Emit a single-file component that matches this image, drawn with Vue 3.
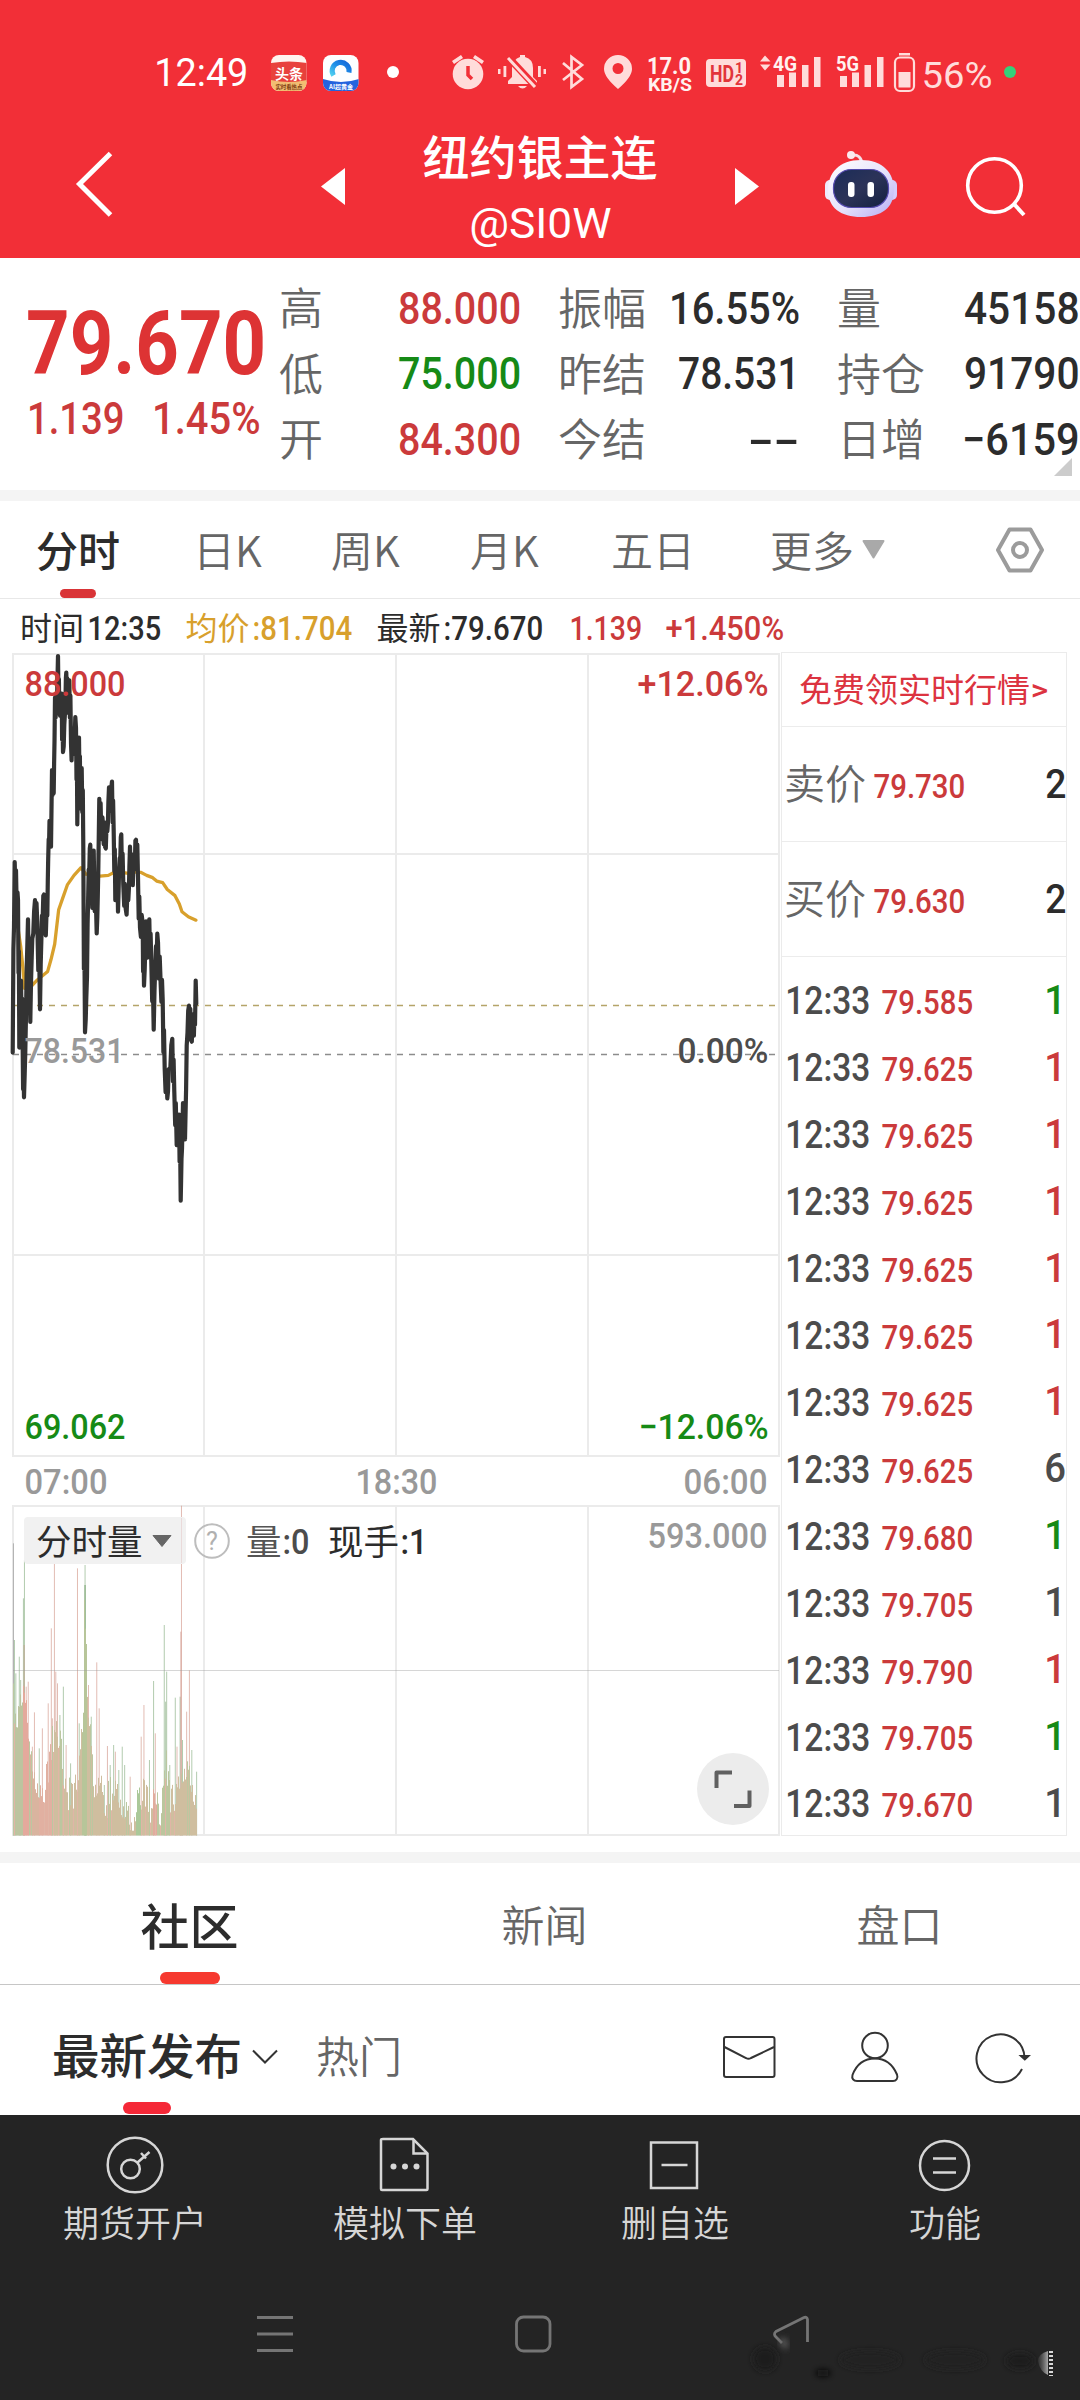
<script setup>
import { h } from 'vue'

// Condensed numeral text: s = font size, w = drawn width, box height = cap height
const T = (props) => {
  const s = +props.s
  const w = +props.w
  const cap = s * 0.711
  return h('svg', { width: w, height: cap, viewBox: `0 0 ${w} ${cap}`, style: { overflow: 'visible', flex: 'none', display: 'block' } }, [
    h('text', {
      x: -s * 0.045, y: cap, 'font-size': s, fill: 'currentColor',
      textLength: w + s * 0.08, lengthAdjust: 'spacingAndGlyphs'
    }, props.t)
  ])
}
T.props = ['t', 'w', 's']

const quotes = [
  [['高', '88.000', 119.5, 'red'], ['振幅', '16.55%', 127.5, 'ink'], ['量', '45158', 112, 'ink']],
  [['低', '75.000', 119.5, 'green'], ['昨结', '78.531', 118, 'ink'], ['持仓', '91790', 112, 'ink']],
  [['开', '84.300', 119.5, 'red'], ['今结', '--', 48, 'ink'], ['日增', '−6159', 114, 'ink']]
]

const tabs = ['分时', '日K', '周K', '月K', '五日']

const ticks = [
  ['79.585', '1', 'green'], ['79.625', '1', 'red'], ['79.625', '1', 'red'], ['79.625', '1', 'red'],
  ['79.625', '1', 'red'], ['79.625', '1', 'red'], ['79.625', '1', 'red'], ['79.625', '6', 'mid'],
  ['79.680', '1', 'green'], ['79.705', '1', 'mid'], ['79.790', '1', 'red'], ['79.705', '1', 'green'],
  ['79.670', '1', 'mid']
]

const chartLabels = [
  { t: '88.000', x: 26, y: 45, w: 98, c: 'red' },
  { t: '+12.06%', x: 639, y: 45, w: 128, c: 'red' },
  { t: '78.531', x: 26, y: 412, w: 97, c: 'grey' },
  { t: '0.00%', x: 679, y: 412, w: 88, c: 'mid' },
  { t: '69.062', x: 26, y: 788, w: 98, c: 'green' },
  { t: '−12.06%', x: 640, y: 788, w: 127, c: 'green' },
  { t: '07:00', x: 26, y: 843, w: 80, c: 'grey' },
  { t: '18:30', x: 357, y: 843, w: 79, c: 'grey' },
  { t: '06:00', x: 685, y: 843, w: 81, c: 'grey' },
  { t: '593.000', x: 649, y: 897, w: 117, c: 'grey' },
  { t: ':0', x: 284, y: 903, w: 24, c: 'mid' },
  { t: ':1', x: 402, y: 903, w: 24, c: 'ink' }
]

const price = [
  38, 1078, 44, 580, 50, 700, 54, 680, 58, 1065, 63, 890, 68, 1070, 72, 1195, 78, 980, 84, 730, 91, 998, 97, 780,
  105, 680, 112, 740, 120, 965, 126, 720, 132, 665, 135, 760, 142, 720, 146, 520, 150, 475, 153, 540, 156, 340,
  161, 400, 165, 150, 170, 190, 174, 42, 178, 190, 185, 140, 189, 293, 195, 190, 199, 85, 203, 190, 208, 105,
  213, 270, 218, 297, 222, 230, 228, 230, 232, 482, 237, 255, 241, 440, 245, 335, 250, 540, 255, 1025, 261, 880,
  266, 600, 271, 535, 277, 700, 281, 550, 290, 767, 295, 600, 298, 415, 304, 510, 309, 480, 315, 540, 322, 500,
  327, 385, 332, 440, 336, 370, 341, 500, 346, 680, 350, 600, 354, 710, 359, 570, 364, 508, 370, 640, 377, 702,
  385, 680, 390, 540, 396, 620, 403, 600, 408, 522, 414, 620, 420, 752, 428, 740, 432, 903, 438, 735, 443, 830,
  448, 730, 454, 840, 461, 1018, 468, 800, 474, 790, 482, 900, 488, 940, 494, 1120, 502, 1198, 508, 1120,
  517, 1042, 523, 1180, 530, 1320, 537, 1240, 542, 1465, 546, 1330, 549, 1210, 555, 1305, 560, 1060, 567, 955,
  573, 1045, 580, 1005, 585, 1005, 587, 890, 589, 950
]
const average = [
  55, 760, 62, 800, 68, 850, 74, 910, 90, 908, 110, 890, 143, 866, 153, 835, 164, 795, 176, 705, 190, 670, 202, 640,
  222, 615, 243, 595, 258, 612, 300, 617, 325, 615, 343, 607, 370, 608, 385, 610, 400, 606, 422, 607, 440, 615,
  458, 621, 470, 630, 488, 634, 502, 652, 525, 668, 538, 690, 546, 710, 565, 723, 588, 732
]
const toPixels = (list) => {
  const out = []
  for (let i = 0; i < list.length; i += 2) out.push([list[i] / 3, list[i + 1] / 2.613 - 12])
  return out
}
const pricePoints = (() => {
  const pts = toPixels(price)
  const out = []
  pts.forEach(([x, y], i) => {
    out.push([x, y])
    const n = pts[i + 1]
    if (n && n[0] - x > 1.2) {
      const k = i % 2 ? 0.42 : 0.6
      const j = 11
      out.push([x + (n[0] - x) * 0.35, y + (n[1] - y) * k + j])
      out.push([x + (n[0] - x) * 0.65, y + (n[1] - y) * k - j])
    }
  })
  return out.map((p) => p.map((v) => v.toFixed(1)).join(',')).join(' ')
})()
const averagePoints = toPixels(average).map((p) => p.join(',')).join(' ')

// volume profile: [x, top]
const profile = [
  [38, 900], [50, 960], [62, 900], [70, 850], [78, 940], [85, 1080], [100, 1130], [120, 1190], [140, 1100], [155, 1000],
  [165, 960], [178, 1070], [195, 1180], [215, 1180], [230, 1080], [241, 940], [244, 600], [250, 700], [252, 890], [258, 960], [272, 1180], [290, 1130],
  [300, 1220], [330, 1160], [345, 1200], [360, 1240], [385, 1285], [400, 1180], [420, 1170], [440, 1230],
  [448, 1130], [460, 1270], [480, 1080], [495, 1200], [515, 1160], [530, 1110], [545, 1130], [571, 1210]
]
const topAt = (x) => {
  for (let i = 1; i < profile.length; i++) {
    if (x <= profile[i][0]) {
      const [a, b] = [profile[i - 1], profile[i]]
      return a[1] + ((b[1] - a[1]) * (x - a[0])) / (b[0] - a[0])
    }
  }
  return 1230
}
const toneAt = (x) => {
  if (x < 66) return '#bcc49f'
  if (x < 84) return '#e4a99c'
  if (x < 112) return '#d9b49f'
  if (x < 156) return '#e1b0a1'
  if (x > 238 && x < 252) return '#b7c599'
  if (x > 394 && x < 410) return '#abc899'
  if (x > 442 && x < 456) return '#e1ab9d'
  if (x > 460 && x < 492) return '#bbc69d'
  return '#cfbe9f'
}
const bars = []
for (let i = 0; i < 184; i++) {
  const cx = 38 + i * 2.904
  const noise = ((i * 7919 + i * i * 31) % 97) / 97
  const top = topAt(cx) + (noise - 0.45) * 110
  bars.push({ x: 13 + i, y: Math.min(top, 1292) / 3 + 748, c: noise > 0.86 ? '#e0b5a6' : noise < 0.1 ? '#bbc7a0' : toneAt(cx) })
}
const spikes = [
  [39, 430, 'k'], [42, 720, 'g'], [46, 820, 'g'], [56, 770, 'g'], [60, 840, 'g'], [68, 595, 'g'], [71, 480, 'g'],
  [70, 735, 'r'], [76, 860, 'r'], [82, 845, 'r'], [94, 1040, 'r'], [100, 937, 'r'], [114, 1045, 'g'], [123, 985, 'r'], [140, 910, 'r'],
  [149, 685, 'r'], [152, 955, 'r'], [158, 480, 'r'], [162, 815, 'r'], [167, 850, 'r'], [174, 945, 'g'], [184, 860, 'g'], [192, 1035, 'r'],
  [205, 1090, 'g'], [225, 505, 'r'], [230, 970, 'g'], [247, 495, 'g'], [246, 555, 'g'], [248, 555, 'g'], [251, 795, 'g'], [257, 855, 'r'],
  [265, 950, 'g'], [281, 787, 'r'], [288, 925, 'r'], [303, 1155, 'g'], [312, 1038, 'r'], [320, 1095, 'g'], [330, 1035, 'g'], [335, 1055, 'r'],
  [345, 1110, 'g'], [355, 1040, 'g'], [362, 1095, 'g'], [378, 1130, 'r'], [410, 1010, 'r'], [418, 915, 'r'], [434, 1080, 'g'], [446, 843, 'g'],
  [451, 1000, 'r'], [477, 675, 'g'], [481, 905, 'g'], [484, 815, 'g'], [493, 1095, 'g'], [509, 893, 'g'], [514, 1040, 'r'], [523, 890, 'g'],
  [527, 317, 'r'], [525, 695, 'r'], [530, 1020, 'g'], [542, 935, 'r'], [550, 811, 'r'], [557, 1050, 'g'], [571, 1115, 'g']
].map(([x, y, k]) => ({ x: x / 2.904 - 0.5, y: y / 3 + 748, k }))

const actions = ['期货开户', '模拟下单', '删自选', '功能']
</script>

<template>
  <main class="screen">
    <header class="top">
      <div class="status">
        <T class="clock" t="12:49" w="91" s="38" />
        <svg class="app-icon" width="36" height="36" viewBox="0 0 36 36">
          <defs><clipPath id="round"><rect width="35.5" height="36" rx="8" /></clipPath></defs>
          <g clip-path="url(#round)">
            <rect width="36" height="36" fill="#fff4ef" />
            <path d="M0 8 Q18 5 36 8V27H0Z" fill="#e8413c" />
            <path d="M0 25Q18 29 36 25V36H0Z" fill="#f2bd72" />
            <text x="4" y="23.5" font-size="14" font-weight="700" fill="#fff">头条</text>
            <text x="4.5" y="34" font-size="5.500" font-weight="700" fill="#7d3b10" textLength="27">实时看热点</text>
          </g>
        </svg>
        <svg class="app-icon second" width="36" height="36" viewBox="0 0 36 36">
          <defs><linearGradient id="swirl" x1="0" y1="1" x2="1" y2="0"><stop offset="0" stop-color="#4fd0f0" /><stop offset=".5" stop-color="#1f8fe8" /><stop offset="1" stop-color="#1566d8" /></linearGradient></defs>
          <g clip-path="url(#round)">
            <rect width="36" height="36" fill="#fdfeff" />
            <path d="M0 24Q18 30 36 24V36H0Z" fill="#2463dd" />
            <path d="M10.500 20.500a8.500 8.500 0 1 1 15.500-3" fill="none" stroke="url(#swirl)" stroke-width="5" />
            <text x="6" y="34" font-size="6" font-weight="700" fill="#fff" textLength="24">AI超黄金</text>
          </g>
        </svg>
        <i class="dot"></i>
        <svg class="sys" width="570" height="44" viewBox="450 50 570 44">
          <g fill="#ffdcda">
            <circle cx="468" cy="74" r="15.300" />
            <path d="M452 61l9-6 2 3-9 6zM484 61l-9-6-2 3 9 6z" />
            <path d="M468 66v9l4 4" fill="none" stroke="#f22f37" stroke-width="3.500" />
            <path d="M508 84v-3l4-4V68q1-9 8-11v-2h5v2q8 2 8 11v9l4 4v3zM518 86h9q-4.500 5-9 0z" />
            <rect x="498" y="69" width="2.500" height="5" /><rect x="503.500" y="66" width="2.800" height="11" />
            <rect x="538" y="66" width="2.800" height="11" /><rect x="543.500" y="69" width="2.500" height="5" />
            <path d="M508 57l28 30" stroke="#f22f37" stroke-width="7" /><path d="M508 58l27 29" stroke="#ffdcda" stroke-width="3" />
            <path d="M563 63l19 16-10.500 8V57L582 65l-19 15" fill="none" stroke="#ffdcda" stroke-width="2.700" />
            <path fill-rule="evenodd" d="M618 55a14 14 0 0 1 14 14q0 8-14 20-14-12-14-20a14 14 0 0 1 14-14zm0 8a5.500 5.500 0 1 0 0 11 5.500 5.500 0 0 0 0-11z" />
            <rect x="706" y="59" width="40" height="28" rx="4" />
            <path d="M760 61.500l5-6 5.500 6zM760 64.500l5 6 5.500-6z" />
            <rect x="777" y="75" width="7" height="12" /><rect x="789" y="72.500" width="7" height="14.500" />
            <rect x="802" y="65" width="6.500" height="22" /><rect x="814" y="57" width="6.500" height="30" />
            <rect x="840" y="76" width="7" height="11" /><rect x="852" y="72.500" width="7" height="14.500" />
            <rect x="864.500" y="65" width="6.500" height="22" /><rect x="877" y="57" width="6.500" height="30" />
            <rect x="899" y="53" width="11" height="2.500" />
            <rect x="895" y="57.500" width="19" height="33.500" rx="5" fill="none" stroke="#ffdcda" stroke-width="2.200" />
            <rect x="898.500" y="72" width="12" height="15.500" />
          </g>
          <g fill="#fff2f0" font-weight="700">
            <text x="647" y="73.500" font-size="23" textLength="44" lengthAdjust="spacingAndGlyphs">17.0</text>
            <text x="648" y="91" font-size="19" textLength="44" lengthAdjust="spacingAndGlyphs">KB/S</text>
            <text x="773" y="70.500" font-size="21" textLength="24" lengthAdjust="spacingAndGlyphs">4G</text>
            <text x="836" y="70.500" font-size="21" textLength="23" lengthAdjust="spacingAndGlyphs">5G</text>
          </g>
          <g fill="#e2343a" font-weight="700">
            <text x="710" y="81.500" font-size="23" textLength="24" lengthAdjust="spacingAndGlyphs">HD</text>
            <text x="735" y="73" font-size="14">1</text>
            <text x="735" y="85" font-size="14">2</text>
          </g>
          <text x="921.500" y="87.500" font-size="37.500" fill="#ffdcda" textLength="71" lengthAdjust="spacingAndGlyphs">56%</text>
          <circle cx="1010" cy="72" r="6" fill="#35d07a" />
        </svg>
      </div>
      <div class="title-bar">
        <svg class="back" width="40" height="68" viewBox="0 0 40 68"><path d="M35.500 3.500L4.500 34l31 31" fill="none" stroke="#fff" stroke-width="5" /></svg>
        <svg class="prev" width="24" height="37" viewBox="0 0 24 37"><path d="M24 0v37L0 18.500z" fill="#fff" /></svg>
        <div class="title">
          <h1>纽约银主连</h1>
          <T t="@SI0W" w="139" s="42" />
        </div>
        <svg class="next" width="24" height="37" viewBox="0 0 24 37"><path d="M0 0v37l24-18.500z" fill="#fff" /></svg>
        <svg class="robot" width="74" height="70" viewBox="824 149 74 70">
          <defs>
            <linearGradient id="shell" x1="0" y1="0" x2="1" y2="1"><stop offset="0" stop-color="#fff" /><stop offset=".55" stop-color="#e6e2fb" /><stop offset="1" stop-color="#b5abf3" /></linearGradient>
            <linearGradient id="face" x1="0" y1="0" x2="1" y2="1"><stop offset="0" stop-color="#1b2c58" /><stop offset=".5" stop-color="#2c3358" /><stop offset="1" stop-color="#13203f" /></linearGradient>
          </defs>
          <path d="M852 155q9-1 10 9" fill="none" stroke="#f6dfe6" stroke-width="3" /><circle cx="851" cy="155" r="4" fill="#fbeaee" />
          <rect x="825" y="180" width="10" height="20" rx="5" fill="#eeeafc" /><rect x="887" y="180" width="10" height="20" rx="5" fill="#d5cdfb" />
          <path d="M861 160c22 0 33 13 33 30 0 18-13 27-33 27s-33-9-33-27c0-17 11-30 33-30z" fill="url(#shell)" />
          <rect x="833.500" y="169.500" width="55" height="38" rx="18" fill="url(#face)" stroke="#5349ae" stroke-width="1.200" />
          <rect x="848" y="182" width="6.500" height="15" rx="3" fill="#fff" /><rect x="867.500" y="182" width="6.500" height="15" rx="3" fill="#fff" />
        </svg>
        <svg class="search" width="62" height="62" viewBox="964 155 62 62"><circle cx="994.500" cy="185.500" r="26.800" fill="none" stroke="#fff" stroke-width="3.600" /><path d="M1014 204l10 11" stroke="#fff" stroke-width="4" /></svg>
      </div>
    </header>

    <section class="quote">
      <div class="last">
        <T class="big" t="79.670" w="233" s="89" />
        <div class="change"><T t="1.139" w="94" s="45" /><T t="1.45%" w="105" s="45" /></div>
      </div>
      <div class="figures">
        <div v-for="(row, r) in quotes" :key="r" class="figure-row">
          <div v-for="q in row" :key="q[0]" class="figure"><span>{{ q[0] }}</span><T :class="q[3]" :t="q[1]" :w="q[2]" s="45" /></div>
        </div>
      </div>
      <i class="corner"></i>
    </section>

    <nav class="periods">
      <span v-for="(tab, i) in tabs" :key="tab" :class="['period', { on: i === 0 }]">{{ tab }}</span>
      <span class="more">更多</span>
      <svg class="caret" width="23" height="19" viewBox="0 0 23 19"><path d="M1.500 1h20L11.500 17.500z" fill="#a9a9a9" stroke="#a9a9a9" stroke-width="2" stroke-linejoin="round" /></svg>
      <svg class="hex" width="50" height="48" viewBox="0 0 50 48" fill="none" stroke="#9b9b9b" stroke-width="4" stroke-linejoin="round"><path d="M14.500 3.500h21L47 24 35.500 44.500h-21L3 24z" /><circle cx="25" cy="24" r="7" /></svg>
    </nav>

    <div class="readout">
      <span>时间</span><T t="12:35" w="71" s="33" />
      <span class="gold">均价</span><T class="gold" t=":81.704" w="97" s="33" />
      <span>最新</span><T t=":79.670" w="97" s="33" />
      <T class="red" t="1.139" w="70" s="33" /><T class="red" t="+1.450%" w="116" s="33" />
    </div>

    <section class="market">
      <svg class="chart" width="780" height="1188" viewBox="0 0 780 1188">
        <g fill="none" stroke="#ebebeb" stroke-width="2">
          <path d="M13 2H779V804H13ZM13 202H779M13 603H779M204 2V804M396 2V804M588 2V804" />
          <path d="M13 854H779V1183H13ZM204 854V1183M396 854V1183M588 854V1183" />
        </g>
        <path d="M13 353.500H776" stroke="#b5a469" stroke-width="1.600" stroke-dasharray="6 6" />
        <path d="M13 402.500H776" stroke="#8c8c8c" stroke-width="1.600" stroke-dasharray="6 6" />
        <polyline :points="averagePoints" fill="none" stroke="#d8a02c" stroke-width="3.300" stroke-linejoin="round" stroke-linecap="round" />
        <polyline :points="pricePoints" fill="none" stroke="#333" stroke-width="4.200" stroke-linejoin="round" stroke-linecap="round" />
        <rect v-for="(b, i) in spikes" :key="'s' + i" :class="'spike-' + b.k" :x="b.x" :y="b.y" width="1" :height="1183.500 - b.y" />
        <rect v-for="(b, i) in bars" :key="i" :x="b.x" :y="b.y" width="1" :height="1183.500 - b.y" :fill="b.c" />
        <path d="M13 1018.500H779" stroke="#999" stroke-opacity=".4" />
        <rect x="24" y="865" width="162" height="47" rx="4" fill="#f1f1f1" />
        <path d="M181.500 866v45" stroke="#eadada" />
        <g class="cjk" font-size="35.500">
          <text x="36" y="903" fill="#2c2c2c">分时量</text>
          <text x="246" y="903" fill="#555">量</text>
          <text x="328" y="903" fill="#2c2c2c">现手</text>
        </g>
        <path d="M153 883.500h18l-9 11z" fill="#666" stroke="#666" stroke-linejoin="round" />
        <circle cx="212" cy="889" r="16.800" fill="none" stroke="#bdbdbd" stroke-width="2" />
        <text x="206" y="898" font-size="25" font-weight="400" fill="#b0b0b0">?</text>
        <text v-for="l in chartLabels" :key="l.t" :class="l.c" fill="currentColor" font-size="35.500" font-weight="500" :x="l.x - 1.500" :y="l.y - 1.500" :textLength="l.w + 3" lengthAdjust="spacingAndGlyphs">{{ l.t }}</text>
        <circle cx="733" cy="1137" r="36" fill="#ececec" />
        <path d="M732 1120.500h-15.500V1136M749.500 1138.500V1154H734" fill="none" stroke="#606060" stroke-width="4" stroke-linejoin="round" />
      </svg>

      <aside class="book">
        <div class="promo"><span>免费领实时行情</span><T t=">" w="15" s="30" /></div>
        <div class="level"><span>卖价</span><T class="red" t="79.730" w="89" s="34" /><T class="ink qty" t="2" w="18" s="40" /></div>
        <div class="level"><span>买价</span><T class="red" t="79.630" w="89" s="34" /><T class="ink qty" t="2" w="18" s="40" /></div>
        <div class="ticks">
          <div v-for="(k, i) in ticks" :key="i" class="tick">
            <T class="mid" t="12:33" w="82" s="39" /><T class="red" :t="k[0]" w="89" s="33.5" /><T :class="['qty', k[2]]" :t="k[1]" w="18.5" s="41" />
          </div>
        </div>
      </aside>
    </section>

    <nav class="boards">
      <span class="board on">社区</span><span class="board">新闻</span><span class="board">盘口</span>
    </nav>

    <div class="feed">
      <span class="feed-tab on">最新发布</span>
      <svg class="chev" width="26" height="16" viewBox="0 0 26 16"><path d="M1 1.500l12 12 12-12" fill="none" stroke="#333" stroke-width="2" /></svg>
      <span class="feed-tab">热门</span>
      <svg class="feed-icons" width="310" height="54" viewBox="722 2030 310 54" fill="none" stroke="#333" stroke-width="2">
        <rect x="724" y="2037" width="50.500" height="40" rx="2" />
        <path d="M724.500 2047l21.500 11q2.500 1.500 5 0l23-11" />
        <circle cx="875" cy="2045.500" r="12.800" />
        <path d="M875 2058.500c13 0 19 9 22 16 1.500 4-1 6.500-4 6.500h-36c-3.500 0-5.500-2.500-4.500-6 3-8 9.500-16.500 22.500-16.500z" />
        <path d="M1022 2069a24 24 0 1 1 2.500-11.500" />
        <path d="M1021 2056h7.500l-3.700 3.500z" fill="#333" />
      </svg>
    </div>

    <footer class="dock">
      <div class="actions">
        <div class="action">
          <svg width="60" height="60" viewBox="0 0 60 60"><circle cx="30" cy="30" r="27.300" /><circle cx="25.500" cy="34" r="9.300" /><path d="M32.500 27.500L44.500 17M36 18l5 5.500" /></svg>
          <span>{{ actions[0] }}</span>
        </div>
        <div class="action">
          <svg width="60" height="60" viewBox="0 0 60 60"><path d="M8 4h30l14.500 14.500V54q0 1-1 1H7q-1 0-1-1V5q0-1 2-1z" /><path d="M38.500 4v14.500H52" /><g fill="#d6d6d6" stroke="none"><circle cx="18.500" cy="31.500" r="3" /><circle cx="30" cy="31.500" r="3" /><circle cx="41.500" cy="31.500" r="3" /></g></svg>
          <span>{{ actions[1] }}</span>
        </div>
        <div class="action">
          <svg width="60" height="60" viewBox="0 0 60 60"><rect x="6" y="7.500" width="46" height="45.500" /><path d="M16.500 30h26" /></svg>
          <span>{{ actions[2] }}</span>
        </div>
        <div class="action">
          <svg width="60" height="60" viewBox="0 0 60 60"><circle cx="29.500" cy="30.500" r="24.500" /><path d="M18 23.500h23M18 37.500h23" /></svg>
          <span>{{ actions[3] }}</span>
        </div>
      </div>
      <svg class="keys" width="1080" height="130" viewBox="0 2270 1080 130">
        <defs>
          <filter id="soft" x="-20%" y="-60%" width="140%" height="220%"><feGaussianBlur stdDeviation="3" /></filter>
          <linearGradient id="moon"><stop offset="0" stop-color="#555" stop-opacity=".3" /><stop offset="1" stop-color="#a9a9a9" /></linearGradient>
        </defs>
        <g fill="none" stroke="#757575" stroke-width="2.800">
          <path d="M257 2317.500h36M257 2334h36M257 2350.500h36" />
          <rect x="516.500" y="2317" width="33.500" height="34" rx="7" />
          <path d="M782 2343l-6-6q-3-3 0-5.500l28-14q3-1 3.500 2V2342" />
        </g>
        <path d="M779 2338l8 1 1 10-6-2z" fill="#606060" filter="url(#soft)" />
        <g filter="url(#soft)" fill="#1f1f1f">
          <ellipse cx="765" cy="2359" rx="12" ry="12" /><ellipse cx="823" cy="2373" rx="8" ry="3.500" fill="#0b0b0b" />
          <ellipse cx="870" cy="2360" rx="30" ry="9" fill="#202020" /><ellipse cx="955" cy="2360" rx="30" ry="9" fill="#202020" />
          <ellipse cx="1020" cy="2361" rx="14" ry="8" />
        </g>
        <path d="M1048 2351q-10 3-10 10 2 11 10 14z" fill="url(#moon)" />
        <path d="M1051 2351v25" stroke="#d8d8d8" stroke-width="4" stroke-dasharray="2 2" />
      </svg>
    </footer>
  </main>
</template>

<style>
body { margin: 0; background: #fff; }
</style>

<style scoped>
.screen {
  width: 1080px; height: 2400px; overflow: hidden; background: #fff; color: #2c2c2c;
  font-family: Roboto, "Noto Sans CJK SC", sans-serif; font-weight: 500;
  display: flex; flex-direction: column;
}
span, h1, .cjk { font-family: "Noto Sans CJK SC", sans-serif; font-weight: 400; white-space: nowrap; }
svg { flex: none; display: block; }
.red { color: #cb3a3b; }
.green { color: #168a16; }
.ink { color: #2c2c2c; }
.mid { color: #4c4c4c; }
.grey { color: #999; }
.gold { color: #d8a02c; }

.top { height: 258px; background: #f22f37; color: #fff; }
.status { height: 110px; display: flex; align-items: flex-start; padding: 35px 0 0 156px; font-weight: 400; box-sizing: border-box; }
.clock { margin-top: 24px; }
.app-icon { margin: 20px 0 0 24px; font-family: "Noto Sans CJK SC", sans-serif; }
.app-icon.second { margin-left: 16px; }
.dot { width: 12px; height: 12px; border-radius: 50%; background: #fff; margin: 31px 0 0 28px; }
.sys { margin: 15px 0 0 51px; }
.title-bar { height: 148px; display: flex; align-items: center; }
.back { margin-left: 75px; }
.prev { margin: 5px 0 0 206px; }
.title { width: 390px; height: 148px; display: flex; flex-direction: column; align-items: center; font-weight: 400; }
.title h1 { margin: 17px 0 25px; font-size: 47px; line-height: 56px; font-weight: 500; }
.next { margin-top: 5px; }
.robot { margin-left: 65px; }
.search { margin: 4px 0 0 66px; }

.quote { height: 232px; display: flex; position: relative; }
.last { width: 281px; padding-left: 29px; box-sizing: border-box; color: #dd3334; }
.big { margin: 53px 0 0 1px; font-weight: 700; }
.change { display: flex; gap: 31px; margin-top: 28px; color: #cb3a3b; }
.figures { padding-top: 17px; }
.figure-row { height: 65.600px; display: flex; align-items: center; }
.figure { width: 279px; box-sizing: border-box; padding-right: 41px; display: flex; justify-content: space-between; align-items: center; }
.figure:last-child { width: 240px; padding-right: 1px; }
.figure span { font-size: 44px; line-height: 60px; margin: -3px 0 0 -2px; color: #666; font-weight: 350; }
.corner { position: absolute; right: 8px; bottom: 14px; border-left: 18px solid transparent; border-bottom: 18px solid #ccc; }

.periods { height: 97px; border-top: 11px solid #f4f4f4; border-bottom: 1px solid #e8e8e8; padding-left: 36px; display: flex; align-items: center; }
.period, .more { font-size: 42px; line-height: 97px; height: 97px; color: #666; margin-top: -3px; font-weight: 350; position: relative; }
.period { width: 138px; }
.period:nth-child(1) { width: 157px; }
.period:nth-child(3) { width: 139px; }
.period:nth-child(4) { width: 141px; }
.period:nth-child(5) { width: 159px; }
.period.on { color: #2c2c2c; font-weight: 500; }
.period.on::after { content: ""; position: absolute; left: 24px; bottom: -1.500px; width: 36px; height: 9px; border-radius: 5px; background: #d93437; }
.caret { margin-left: 8px; }
.hex { margin-left: 110px; }

.readout { height: 53px; padding: 6px 0 0 20px; display: grid; align-items: center; grid-template-columns: 68.500px 97px 68px 123px 68px 126px 96px auto; box-sizing: border-box; }
.readout span { font-size: 32px; line-height: 40px; margin-top: -5px; }

.market { height: 1188px; display: flex; margin-bottom: 12px; }
.spike-r { fill: #cf8f80; opacity: .6; }
.spike-g { fill: #7fa878; opacity: .6; }
.spike-k { fill: #888; opacity: .6; }
.book { width: 286px; height: 1184px; border: 1px solid #ebebeb; box-sizing: border-box; margin-left: 1px; }
.promo { height: 73px; display: flex; align-items: center; padding-left: 17px; color: #dc3340; box-sizing: border-box; }
.promo span { font-size: 33px; line-height: 40px; margin-top: -4px; margin-right: 2px; }
.level { height: 115px; border-top: 1px solid #ececec; box-sizing: border-box; display: flex; align-items: flex-end; padding: 0 1px 43px 2px; }
.level span { font-size: 41px; line-height: 41px; margin-bottom: -4px; margin-right: 9px; color: #666; font-weight: 350; }
.qty { margin-left: auto; }
.ticks { border-top: 1px solid #ececec; }
.tick { height: 66.950px; box-sizing: border-box; display: flex; align-items: flex-end; padding: 0 2px 10px 5px; gap: 14px; }

.boards { height: 133px; border-top: 11px solid #f4f4f4; border-bottom: 1px solid #c6c6c6; padding: 0 3px 0 12px; display: flex; box-sizing: border-box; }
.board { flex: 1; text-align: center; font-size: 43px; line-height: 121px; color: #666; font-weight: 350; position: relative; }
.board.on { font-size: 49px; color: #2c2c2c; font-weight: 500; }
.board.on::after { content: ""; position: absolute; left: 148px; bottom: 0; width: 60px; height: 12px; border-radius: 6px; background: #f6392f; }

.feed { height: 130px; display: flex; align-items: center; padding-left: 52px; }
.feed-tab { font-size: 43px; line-height: 130px; margin-top: 7px; color: #666; font-weight: 350; position: relative; }
.feed-tab.on { font-size: 47.500px; color: #2c2c2c; font-weight: 500; }
.feed-tab.on::after { content: ""; position: absolute; left: 71px; bottom: 4.500px; width: 48px; height: 12px; border-radius: 6px; background: #f52837; }
.chev { margin: 14px 38px 0 10px; }
.feed-icons { margin-left: auto; margin-right: 48px; margin-top: 13px; }

.dock { flex: 1; background: #242424; }
.actions { display: flex; height: 155px; }
.action { flex: 1; display: flex; flex-direction: column; align-items: center; padding-top: 20px; fill: none; stroke: #d6d6d6; stroke-width: 2.500; color: #d6d6d6; }
.action span { font-size: 36px; line-height: 44px; margin-top: 4px; font-weight: 350; }
</style>
